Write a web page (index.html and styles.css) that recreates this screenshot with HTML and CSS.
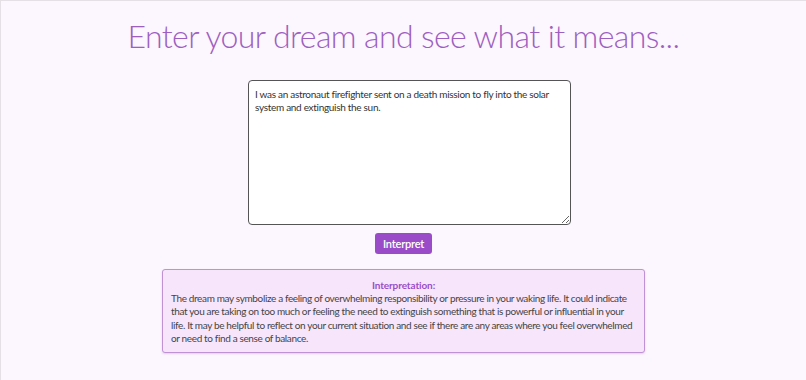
FILE: index.html
```html
<!DOCTYPE html>
<html>
<head>
<meta charset="utf-8">
<link rel="stylesheet" href="styles.css">
</head>
<body>
<main class="page">
  <h1 class="title">Enter your dream and see what it means...</h1>
  <textarea class="dream">I was an astronaut firefighter sent on a death mission to fly into the solar system and extinguish the sun.</textarea>
  <button class="interpret">Interpret</button>
  <section class="result">
    <h2 class="result-title">Interpretation:</h2>
    <p class="result-text">The dream may symbolize a feeling of overwhelming responsibility or pressure in your waking life. It could indicate that you are taking on too much or feeling the need to extinguish something that is powerful or influential in your life. It may be helpful to reflect on your current situation and see if there are any areas where you feel overwhelmed or need to find a sense of balance.</p>
  </section>
</main>
</body>
</html>
```
FILE: styles.css
```css
html, body {
  margin: 0;
  padding: 0;
  height: 100%;
}
body {
  background: #fcf6fe;
  font-family: Lato, "Open Sans", sans-serif;
  border-top: 1px solid #e4e0e6;
  border-left: 1px solid #e4e0e6;
  box-sizing: border-box;
}
.page {
  display: flex;
  flex-direction: column;
  align-items: center;
}
.title {
  margin: 14px 0 0 0;
  font-weight: 300;
  font-size: 32px;
  line-height: 42px;
  color: #9d60c0;
  letter-spacing: -0.6px;
}
.dream {
  margin-top: 23px;
  margin-left: 12px;
  width: 323px;
  height: 145px;
  box-sizing: border-box;
  border: 1px solid #555;
  border-radius: 4px;
  padding: 7px 6px;
  font-family: Lato, sans-serif;
  font-size: 10px;
  letter-spacing: -0.3px;
  line-height: 13px;
  color: #333;
  background: #fff;
  resize: vertical;
}
.interpret {
  margin-top: 8px;
  width: 57px;
  height: 21px;
  border: none;
  border-radius: 3px;
  background: #9a4cc8;
  color: #fff;
  font-family: Lato, sans-serif;
  font-size: 11px;
  font-weight: 600;
  letter-spacing: -0.2px;
  padding: 0;
}
.result {
  margin-top: 15px;
  width: 483px;
  box-sizing: border-box;
  background: #f7e5fb;
  border: 1px solid #bf92d6;
  border-radius: 3px;
  padding: 8px 8px 7px 8px;
  box-shadow: 0 1px 2px rgba(120, 60, 150, 0.2);
}
.result-title {
  margin: 0;
  text-align: center;
  font-size: 10px;
  letter-spacing: -0.1px;
  line-height: 14px;
  font-weight: 700;
  color: #9b4dc8;
}
.result-text {
  margin: 0;
  font-size: 10px;
  letter-spacing: -0.36px;
  line-height: 13.3px;
  color: #444;
}
```
